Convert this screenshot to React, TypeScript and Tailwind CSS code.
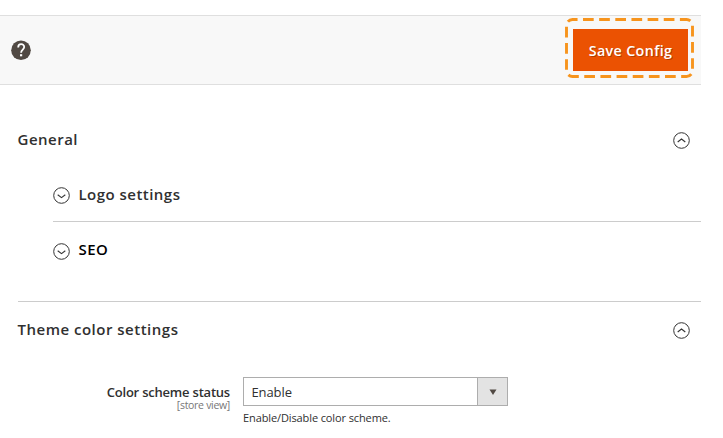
import React from "react";

function Chevron({ up = false }: { up?: boolean }) {
  return (
    <svg className="block h-[17px] w-[17px] shrink-0" viewBox="0 0 17 17" fill="none" stroke="#333">
      <circle cx="8.5" cy="8.5" r="7.8" strokeWidth="1" />
      <path d={up ? "M4.7 10 L8.5 7 L12.3 10" : "M4.7 7.8 L8.5 10.6 L12.3 7.8"} strokeWidth="1.1" />
    </svg>
  );
}

function Header() {
  return (
    <header className="mt-[15px] flex h-[70px] items-center justify-between border-y border-[#dfdfdf] bg-[#f8f8f8] pr-[7px] pl-[11px]">
      <svg className="block h-5 w-5" viewBox="0 0 20 20">
        <circle cx="10" cy="10.2" r="9.8" fill="#514943" />
        <path d="M7.2 7.4 C7.2 3.1 13.2 3.3 13.2 7.1 C13.2 9.6 10.1 9.6 10.1 12.7" fill="none" stroke="#fff" strokeWidth="1.8" />
        <rect x="9" y="14.2" width="2.2" height="2.1" fill="#fff" />
      </svg>
      <div className="relative -mt-1 flex h-[60px] w-[129px] items-start pt-[11px] pl-2">
        <svg className="absolute inset-0" width="129" height="60" fill="none">
          <rect x="1.5" y="1.5" width="126" height="57" rx="6" stroke="#f7941d" strokeWidth="2.9" strokeDasharray="10.7 5.45" strokeDashoffset="-10.5" />
        </svg>
        <button className="h-[42px] w-[115px] bg-[#eb5202] pt-0.5 text-[14.3px] font-semibold tracking-[0.35px] text-white [text-shadow:1px_1px_0_rgba(0,0,0,.25)]">
          Save Config
        </button>
      </div>
    </header>
  );
}

export default function App() {
  return (
    <div className="h-[438px] w-[723px] overflow-hidden bg-white font-['Open_Sans','Noto_Sans',sans-serif] text-[#303030]">
      <div className="flex w-[701px] flex-col">
        <Header />
        <main className="pl-[18px]">
          <section className="h-[217px] border-b border-[#ccc] pt-11">
            <div className="flex h-[23px] items-center justify-between pr-[11.5px]">
              <h2 className="-ml-[0.5px] pb-0.5 text-[15px] leading-[23px] font-semibold tracking-[0.5px]">General</h2>
              <Chevron up />
            </div>
            <div className="ml-[35px]">
              <div className="flex h-[70px] items-center gap-[8.5px] border-b border-[#ccc] pt-[17px]">
                <Chevron />
                <h3 className="pb-0.5 text-[15px] leading-5 font-semibold tracking-[0.47px]">Logo settings</h3>
              </div>
              <div className="flex h-[58px] items-center gap-[8.5px] text-black">
                <Chevron />
                <h3 className="pb-1 text-[15px] leading-5 font-semibold tracking-[0.4px]">SEO</h3>
              </div>
            </div>
          </section>
          <section className="pt-[17px]">
            <div className="flex h-[23px] items-center justify-between pr-[11.5px]">
              <h2 className="-ml-[0.5px] pb-0.5 text-[15px] leading-[23px] font-semibold tracking-[0.5px]">Theme color settings</h2>
              <Chevron up />
            </div>
            <div className="mt-[35px] flex gap-[13px]">
              <div className="w-[212px] pt-2 text-right">
                <div className="text-[13px] leading-[15px] font-semibold tracking-[-0.21px]">Color scheme status</div>
                <div className="text-[10.5px] leading-[11px] tracking-[-0.3px] text-[#777]">[store view]</div>
              </div>
              <div>
                <div className="flex h-[29px] w-[265px] border border-[#adadad]">
                  <span className="flex-1 pl-[7.5px] text-[13px] leading-[28px] tracking-[-0.1px]">Enable</span>
                  <span className="flex w-[30px] items-center justify-center border-l border-[#adadad] bg-[#e3e3e3]">
                    <svg className="block" width="8" height="6"><path d="M0.5 0.5H7.5L4 6Z" fill="#514943" /></svg>
                  </span>
                </div>
                <p className="mt-1 text-[11px] leading-4 tracking-[-0.11px]">Enable/Disable color scheme.</p>
              </div>
            </div>
          </section>
        </main>
      </div>
    </div>
  );
}
